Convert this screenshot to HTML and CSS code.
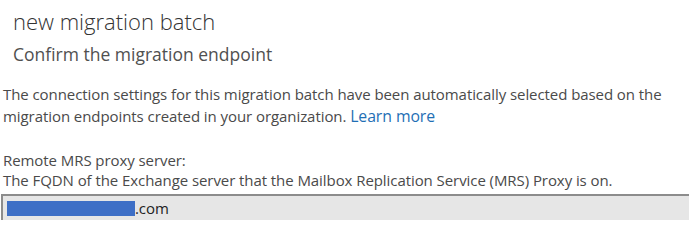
FILE: index.html
```html
<!DOCTYPE html>
<html lang="en">
<head>
    <meta charset="UTF-8">
    <title>new migration batch</title>
    <link rel="stylesheet" href="styles.css">
</head>
<body>
    <div class="header">
        <h1 class="title">new migration batch</h1>
        <h2 class="subtitle">Confirm the migration endpoint</h2>
    </div>

    <p class="intro">
        The connection settings for this migration batch have been automatically selected based on the
        migration endpoints created in your organization. <a href="#" class="link">Learn more</a>
    </p>

    <div class="field">
        <div class="field-label">Remote MRS proxy server:</div>
        <div class="field-hint">The FQDN of the Exchange server that the Mailbox Replication Service (MRS) Proxy is on.</div>
        <div class="input">
            <span class="redacted"></span><span class="input-text">.com</span>
        </div>
    </div>
</body>
</html>
```

FILE: styles.css
```css
* {
    margin: 0;
    padding: 0;
    box-sizing: border-box;
}

body {
    width: 697px;
    height: 245px;
    overflow: hidden;
    background-color: #ffffff;
    color: #4a4a4a;
    font-family: "Open Sans", "Noto Sans", sans-serif;
}

.header {
    padding: 6px 0 0 13px;
}

.title {
    font-size: 22px;
    font-weight: 300;
    line-height: 30px;
    color: #333333;
}

.subtitle {
    margin-top: 6px;
    font-size: 17.5px;
    font-weight: 400;
    line-height: 24px;
    color: #505050;
}

.intro {
    margin-top: 17px;
    padding-left: 3px;
    font-size: 15px;
    line-height: 22px;
    letter-spacing: -0.07px;
}

.link {
    font-size: 15.8px;
    color: #1f6fb5;
    text-decoration: none;
}

.field {
    margin-top: 23px;
    padding-left: 3px;
    font-size: 15px;
    line-height: 20px;
    letter-spacing: -0.07px;
}

.input {
    display: flex;
    align-items: center;
    width: 688px;
    height: 26px;
    margin-top: 4px;
    margin-left: -2px;
    padding-left: 4px;
    background-color: #e6e6e6;
    border-top: 2px solid #8c8c8c;
    border-left: 2px solid #8c8c8c;
    color: #222222;
}

.redacted {
    display: inline-block;
    width: 128px;
    height: 15px;
    background-color: #3e6fc6;
}
```
